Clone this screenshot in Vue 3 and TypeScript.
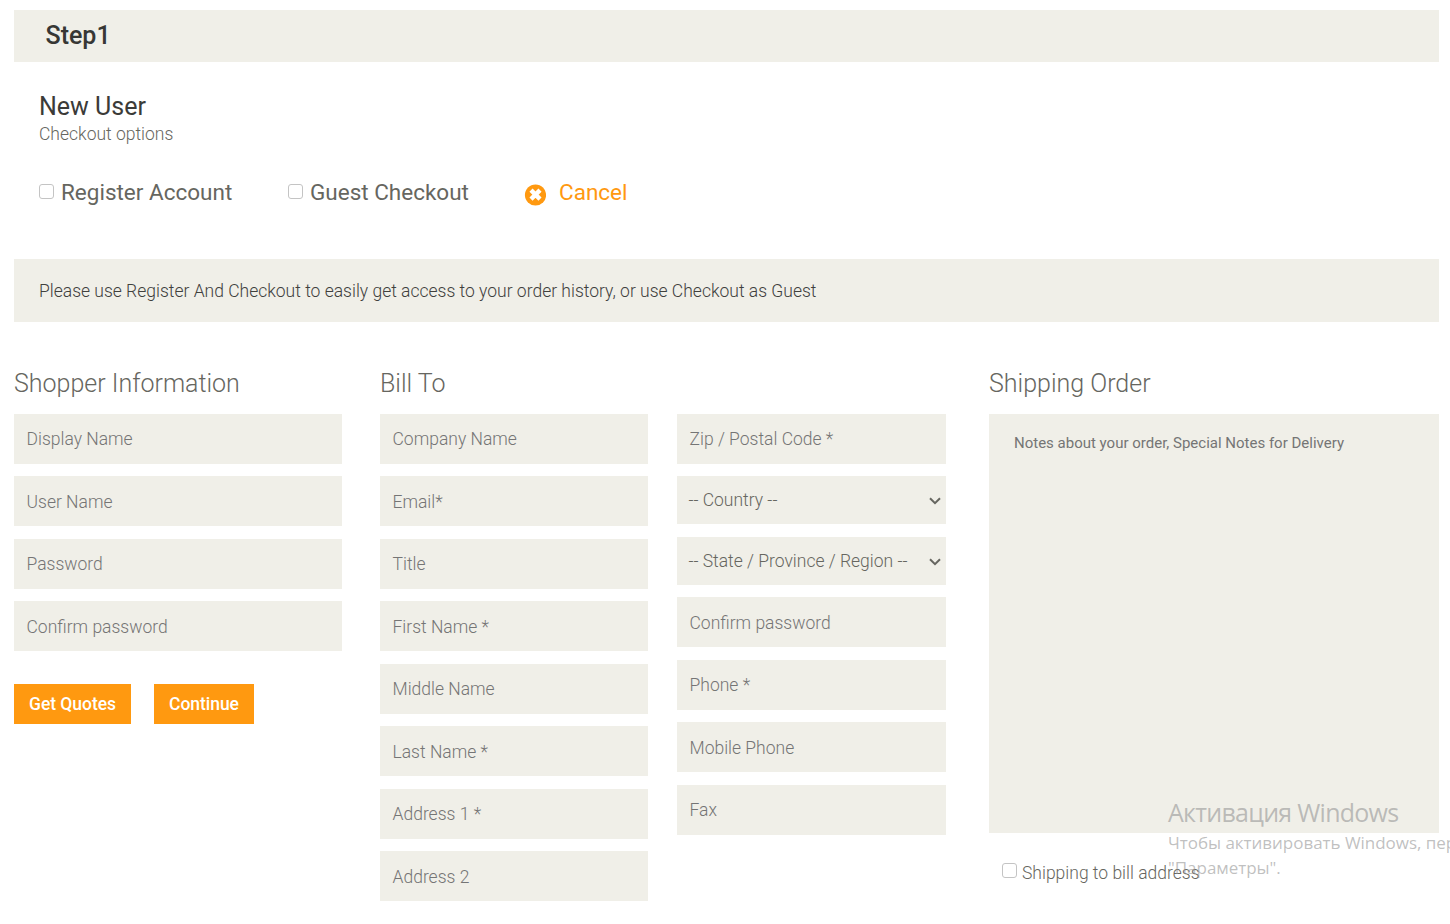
<script setup lang="ts">
interface Field { label: string; kind?: 'select' }

const shopper: Field[] = [
  { label: 'Display Name' }, { label: 'User Name' }, { label: 'Password' }, { label: 'Confirm password' },
]
const billing: Field[] = [
  { label: 'Company Name' }, { label: 'Email*' }, { label: 'Title' }, { label: 'First Name *' },
  { label: 'Middle Name' }, { label: 'Last Name *' }, { label: 'Address 1 *' }, { label: 'Address 2' },
]
const contact: Field[] = [
  { label: 'Zip / Postal Code *' }, { label: '-- Country --', kind: 'select' },
  { label: '-- State / Province / Region --', kind: 'select' }, { label: 'Confirm password' },
  { label: 'Phone *' }, { label: 'Mobile Phone' }, { label: 'Fax' },
]
</script>

<template>
  <main class="page">
    <header class="step"><span>Step1</span></header>
    <section class="user">
      <h2><span>New User</span></h2>
      <p><span>Checkout options</span></p>
      <div class="options">
        <label class="option register"><i class="box"></i><span>Register Account</span></label>
        <label class="option guest"><i class="box"></i><span>Guest Checkout</span></label>
        <a class="cancel">
          <svg width="22" height="22" viewBox="0 0 22 22"><circle cx="11.5" cy="11" r="10.6" fill="#ff9910" /><path d="M7 6.1l9 9M16 6.1l-9 9" stroke="#fff" stroke-width="4.4" /></svg>
          <span>Cancel</span>
        </a>
      </div>
    </section>
    <div class="notice"><span>Please use Register And Checkout to easily get access to your order history, or use Checkout as Guest</span></div>
    <div class="columns">
      <section class="shopper">
        <h3><span>Shopper Information</span></h3>
        <div class="fields">
          <div v-for="f in shopper" :key="f.label" class="field"><span>{{ f.label }}</span></div>
        </div>
        <div class="buttons"><button class="quotes">Get Quotes</button><button class="continue">Continue</button></div>
      </section>
      <section class="bill">
        <h3><span>Bill To</span></h3>
        <div class="pair">
          <div class="fields billing">
            <div v-for="f in billing" :key="f.label" class="field"><span>{{ f.label }}</span></div>
          </div>
          <div class="fields contact">
            <div v-for="f in contact" :key="f.label" class="field" :class="f.kind">
              <span>{{ f.label }}</span>
              <svg v-if="f.kind" width="12" height="8" viewBox="0 0 12 8"><path d="M1 1.2l5 5 5-5" fill="none" stroke="#666660" stroke-width="2" /></svg>
            </div>
          </div>
        </div>
      </section>
      <section class="shipping">
        <h3><span>Shipping Order</span></h3>
        <div class="notes"><span>Notes about your order, Special Notes for Delivery</span></div>
        <label class="same"><i class="box"></i><span>Shipping to bill address</span></label>
      </section>
    </div>
    <aside class="watermark">
      <div class="wm-title">Активация Windows</div>
      <div class="wm-text">Чтобы активировать Windows, перейдите в раздел</div>
      <div class="wm-text">"Параметры".</div>
    </aside>
  </main>
</template>

<style>
html, body { background: #fff; overflow: hidden; }
</style>
<style scoped>
* { box-sizing: border-box; }
.page { position: relative; width: 1450px; height: 924px; overflow: hidden; padding: 10px 11px 0 14px; font-family: Roboto, sans-serif; color: #666660; font-weight: 300; white-space: nowrap; }
.step { height: 52px; background: #f0efe8; padding-left: 31.5px; font-size: 25px; line-height: 52px; font-weight: 500; color: #373735; }
.user { height: 197px; padding: 30px 0 0 25px; }
h2, h3, p { margin: 0; }
h2 { height: 30px; font-size: 25px; line-height: 29px; font-weight: 400; color: #3b3b38; }
.user p { font-size: 17.5px; line-height: 25px; }
.options { display: flex; padding-top: 29px; height: 61px; font-size: 22.5px; font-weight: 400; line-height: 32px; }
.option { display: flex; align-items: flex-start; }
.option .box { margin: 8px 7px 0 0; }
.register { width: 249px; }
.guest { width: 236px; }
.box { flex: none; width: 15px; height: 15px; border: 1px solid #c4c4c4; border-radius: 3px; background: #fff; }
.cancel { display: flex; color: #ff9910; }
.cancel svg { margin: 8px 13px 0 0; }
.notice { height: 63px; background: #f0efe8; padding-left: 25px; font-size: 17.5px; line-height: 64px; color: #40403d; }
.columns { display: flex; padding-top: 47px; }
h3 { height: 45px; font-size: 25px; line-height: 30px; font-weight: 300; }
.shopper { width: 328px; margin-right: 38px; }
.bill { width: 566px; margin-right: 43px; }
.shipping { width: 450px; }
.pair { display: flex; gap: 29px; align-items: flex-start; }
.fields { display: flex; flex-direction: column; gap: 12.48px; }
.billing { width: 268px; }
.contact { width: 269px; }
.field { height: 50px; padding: 0.3px 0 0 12.5px; background: #f0efe8; font-size: 17.5px; line-height: 50px; color: #757575; }
.select { display: flex; align-items: center; justify-content: space-between; height: 48px; padding: 0 5px 0 11.4px; line-height: 48px; color: #666660; }
.select svg { margin-top: 1.6px; }
.buttons { display: flex; gap: 23px; margin-top: 33px; }
button { height: 40px; padding: 0; border: 0; background: #ff9910; color: #fff; font: 500 17.5px/40px Roboto, sans-serif; letter-spacing: -0.05px; }
.quotes { width: 117px; }
.continue { width: 100px; }
.notes { height: 419px; padding: 18px 25px; background: #f0efe8; font-size: 15px; font-weight: 400; line-height: 22px; color: #757575; }
.same { display: flex; margin: 28px 0 0 13px; font-size: 17.5px; line-height: 24px; }
.same .box { margin: 2px 5px 0 0; }
.watermark { position: absolute; left: 1168px; top: 796px; color: rgba(150, 150, 150, 0.6); font-family: "Open Sans", "Noto Sans", sans-serif; font-weight: 400; }
.wm-title { font-size: 25px; line-height: 33px; height: 34px; letter-spacing: -0.73px; }
.wm-text { font-size: 17px; line-height: 25px; letter-spacing: -0.03px; }
</style>
